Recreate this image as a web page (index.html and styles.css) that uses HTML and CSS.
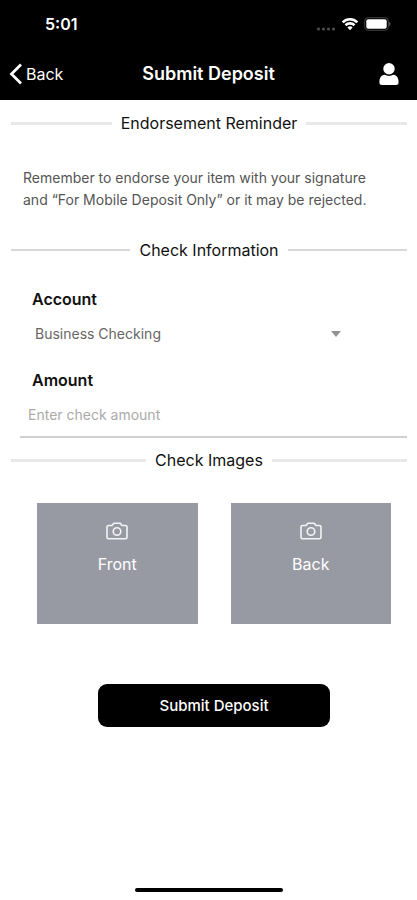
FILE: index.html
```html
<!DOCTYPE html>
<html lang="en">
<head>
<meta charset="utf-8">
<meta name="viewport" content="width=device-width, initial-scale=1">
<title>Submit Deposit</title>
<link rel="stylesheet" href="styles.css">
</head>
<body>
<header class="header">
  <div class="status">
    <span class="time">5:01</span>
    <div class="status-icons">
      <svg width="20" height="4" viewBox="0 0 20 4" fill="#4c4c4c" aria-hidden="true"><circle cx="2.5" cy="2" r="1.6"/><circle cx="7.5" cy="2" r="1.6"/><circle cx="12.500" cy="2" r="1.6"/><circle cx="17.500" cy="2" r="1.6"/></svg>
      <svg class="wifi" width="18" height="14" viewBox="0 0 18 14" fill="none" stroke="#fff" stroke-width="2.600" aria-hidden="true"><path d="M1.700 5.300C5.800 1.200 12.200 1.200 16.300 5.300"/><path d="M4.500 8.200C7 5.800 11 5.800 13.500 8.200"/><path d="M9 13.200L6.400 10.400C7.900 9 10.100 9 11.600 10.400Z" fill="#fff" stroke="none"/></svg>
      <svg class="battery" width="27" height="14" viewBox="0 0 27 14" aria-hidden="true"><rect x=".7" y=".7" width="23.600" height="12.600" rx="3.500" fill="none" stroke="#444"/><rect x="2.300" y="2.200" width="20.400" height="9.600" rx="2" fill="#fff"/><path d="M25.300 4.800C26.800 5.500 26.800 8.500 25.300 9.200Z" fill="#777"/></svg>
    </div>
  </div>
  <nav class="nav">
    <a class="back" href="#"><svg width="14" height="22" viewBox="0 0 14 22" fill="none" stroke="#fff" stroke-width="2.800" aria-hidden="true"><path d="M12 1.500L2.500 11L12 20.500"/></svg>Back</a>
    <h1 class="title">Submit Deposit</h1>
    <button class="profile" type="button" aria-label="Profile"><svg width="20" height="24" viewBox="0 0 20 24" fill="#fff" aria-hidden="true"><circle cx="10" cy="6.700" r="5.700"/><path d="M5.600 12.800Q10 15 14.400 12.800C18 13.300 19.600 16 19.600 20.500Q19.600 23 17 23H3Q.4 23 .4 20.500C.4 16 2 13.300 5.600 12.800Z"/></svg></button>
  </nav>
</header>
<main class="main">
  <h2 class="divider soft">Endorsement Reminder</h2>
  <p class="note">Remember to endorse your item with your signature and “For Mobile Deposit Only” or it may be rejected.</p>
  <h2 class="divider">Check Information</h2>
  <form class="form">
    <label class="label" for="account">Account</label>
    <div class="select-row">
      <select class="select" id="account"><option>Business Checking</option></select>
      <svg class="caret" width="10" height="6" viewBox="0 0 10 6" fill="#929292" aria-hidden="true"><path d="M0 0H10L5 6Z"/></svg>
    </div>
    <label class="label" for="amount">Amount</label>
    <input class="input" id="amount" type="text" inputmode="decimal" placeholder="Enter check amount">
    <h2 class="divider soft">Check Images</h2>
    <div class="tiles">
      <button class="tile" type="button">
        <svg width="22" height="18" viewBox="0 0 22 18" fill="none" stroke="#f4f4f6" stroke-width="1.600" stroke-linejoin="round" aria-hidden="true"><path d="M2.500 3.500H6L7.800 1.200H14.200L16 3.500H19.500Q21 3.500 21 5V15.200Q21 16.700 19.500 16.700H2.500Q1 16.700 1 15.200V5Q1 3.500 2.500 3.500Z"/><circle cx="11" cy="9.500" r="3.800"/></svg>
        Front
      </button>
      <button class="tile" type="button">
        <svg width="22" height="18" viewBox="0 0 22 18" fill="none" stroke="#f4f4f6" stroke-width="1.600" stroke-linejoin="round" aria-hidden="true"><path d="M2.500 3.500H6L7.800 1.200H14.200L16 3.500H19.500Q21 3.500 21 5V15.200Q21 16.700 19.500 16.700H2.500Q1 16.700 1 15.200V5Q1 3.500 2.500 3.500Z"/><circle cx="11" cy="9.500" r="3.800"/></svg>
        Back
      </button>
    </div>
    <button class="submit" type="submit">Submit Deposit</button>
  </form>
</main>
<div class="home-bar"></div>
</body>
</html>
```
FILE: styles.css
```css
* {
  box-sizing: border-box;
}

body {
  margin: 0;
  min-height: 100vh;
  display: flex;
  flex-direction: column;
  background: #fff;
  color: #111;
  font-family: Inter, "Liberation Sans", sans-serif;
  font-size: 16px;
  line-height: 24px;
}

button,
input,
select {
  font: inherit;
  border: 0;
  padding: 0;
  background: none;
}

.header {
  background: #000;
  color: #fff;
}

.status {
  display: flex;
  align-items: center;
  justify-content: space-between;
  height: 48px;
  padding: 0 26px 0 45px;
}

.time {
  font-weight: 600;
}

.status-icons {
  display: flex;
  align-items: center;
  gap: 5px;
}

.status-icons svg:first-child {
  align-self: flex-end;
}

.nav {
  display: grid;
  grid-template-columns: 1fr auto 1fr;
  align-items: center;
  height: 52px;
  padding: 0 9px;
}

.back {
  display: flex;
  align-items: center;
  gap: 3px;
  color: #fff;
  text-decoration: none;
}

.title {
  margin: 0;
  font-size: 18px;
  font-weight: 600;
}

.profile {
  justify-self: end;
  display: flex;
  padding: 0 9px;
}

.main {
  padding: 11px 10px 24px 11px;
}

.divider {
  display: flex;
  align-items: center;
  gap: 9px;
  margin: 0;
  font-size: 16px;
  font-weight: 400;
}

.divider::before,
.divider::after {
  content: "";
  flex: 1;
  height: 2px;
  background: #d8d8d8;
}

.soft::before,
.soft::after {
  height: 3px;
  background: #e8e8e8;
}

.note {
  margin: 32px 24px 27px 12px;
  font-size: 14px;
  line-height: 22px;
  color: #555;
}

.form {
  display: flex;
  flex-direction: column;
}

.label {
  margin: 25px 21px 0;
  font-weight: 600;
}

.select-row {
  display: flex;
  align-items: center;
  margin: 7px 66px 0 24px;
}

.select {
  flex: 1;
  min-width: 0;
  height: 32px;
  appearance: none;
  font-size: 14px;
  color: #666;
}

.select-row + .label {
  margin-top: 18px;
}

.input {
  height: 46px;
  margin: 0 0 10px 9px;
  padding: 0 8px;
  border-bottom: 2px solid #d0d0d0;
  font-size: 14px;
  color: #333;
}

.input::placeholder {
  color: #aaa;
}

.tiles {
  display: grid;
  grid-template-columns: 1fr 1fr;
  gap: 33px;
  margin: 31px 16px 0 26px;
}

.tile {
  display: flex;
  flex-direction: column;
  align-items: center;
  gap: 12px;
  min-height: 121px;
  padding: 19px 0;
  background: #989aa3;
  color: #fff;
}

.submit {
  min-height: 43px;
  margin: 60px 77px 0 87px;
  border-radius: 9px;
  background: #000;
  color: #fff;
  font-size: 15px;
  font-weight: 500;
}

.home-bar {
  width: 148px;
  height: 4px;
  margin: auto auto 8px;
  border-radius: 2px;
  background: #000;
}
```
